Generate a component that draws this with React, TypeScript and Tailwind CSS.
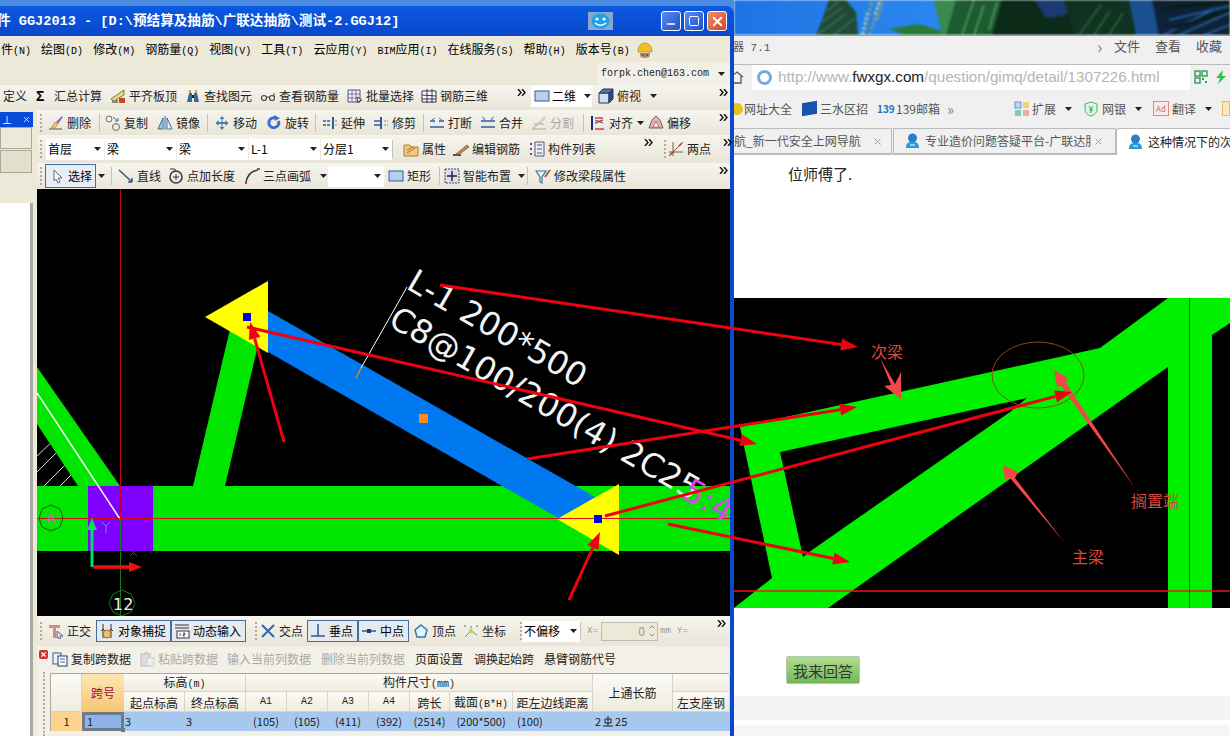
import React from "react";
import { Minus, Square, X, ChevronUp, ChevronDown } from "lucide-react";

const svgBox = "w-4 h-4 shrink-0";

const icons: Record<string, React.ReactNode> = {
  broom: (<><path d="M1 14h13" stroke="#555" strokeWidth="1" /><path d="M3 13l4-6 3 2-3 4z" fill="#e8c860" stroke="#9a7a30" strokeWidth=".5" /><path d="M8 7l6-6 1 1-5 7z" fill="#a060c0" /></>),
  copy: (<><circle cx="4" cy="4" r="3" fill="none" stroke="#667" /><circle cx="11" cy="12" r="3.5" fill="none" stroke="#667" /><path d="M8 2l5 4M13 3v3h-3" stroke="#3a6ea5" fill="none" /></>),
  mirror: (<><path d="M1 14L6 3v11z" fill="#a8c8e8" stroke="#3a6ea5" /><path d="M15 14L10 3v11z" fill="#e8f0fa" stroke="#3a6ea5" /><path d="M8 1v14" stroke="#3a6ea5" /></>),
  move: (<path d="M8 1l2.500 3h-2v3h3v-2l3 3-3 3v-2h-3v3h2L8 15l-2.500-3h2V9h-3v2l-3-3 3-3v2h3V4h-2z" fill="#4a7aa8" />),
  rotate: (<><path d="M12.500 6a5 5 0 1 1-2-2.500" fill="none" stroke="#3a70d0" strokeWidth="3" /><path d="M8 0l6 3-5 3z" fill="#3a70d0" /></>),
  extend: (<><path d="M1 6h8M1 10h8" stroke="#2a5fa8" strokeWidth="1.500" strokeDasharray="3 1" /><path d="M11 2v12" stroke="#2a5fa8" strokeWidth="2" /><path d="M13 6h2M13 10h2" stroke="#889" /></>),
  trim: (<><path d="M1 6h6M1 10h6" stroke="#2a5fa8" strokeWidth="1.500" /><path d="M8 2v12" stroke="#2a5fa8" strokeWidth="2" /><path d="M11 6h4M11 10h4" stroke="#889" strokeDasharray="2 1" /></>),
  brk: (<><path d="M1 6h5M10 6h5M1 12h14" stroke="#2a5fa8" strokeWidth="1.500" /><path d="M6 3L3 5l3 2M10 3l3 2-3 2" stroke="#3a80d0" fill="none" /></>),
  merge: (<><path d="M1 6h14M1 12h14" stroke="#2a5fa8" strokeWidth="1.500" /><path d="M2 2l3 2-3 2M14 2l-3 2 3 2" stroke="#3a80d0" fill="none" /></>),
  split: (<><path d="M1 14L13 4M1 14h14M3 9h10" stroke="#c0c0b8" strokeWidth="1.500" fill="none" /><path d="M10 3l5-2-2 5z" fill="#d0d0c8" /></>),
  align: (<><path d="M2 1v14" stroke="#1a2a80" strokeWidth="2" /><path d="M5 3h8M5 8l8-3M5 14h9" stroke="#d04040" strokeWidth="1.500" /><path d="M5 5l8 3" stroke="#2a5fa8" /></>),
  offset: (<><path d="M1 13l3-8 4-4 4 4 3 8z" fill="#e8b0b0" stroke="#666" /><path d="M5 12l3-6 3 6z" fill="#fff" stroke="#c06060" /></>),
  attr: (<><path d="M1 4h6l1 2h7v9H1z" fill="#f0c880" stroke="#b08030" /><path d="M4 12l8-5M4 9l6-3" stroke="#c06020" /></>),
  edit: (<><path d="M0 14h8" stroke="#222" strokeWidth="1.500" /><path d="M3 13L14 4l2 2-11 8z" fill="#c09040" stroke="#504020" strokeWidth=".6" /></>),
  list: (<><path d="M6 1h9v14H6z" fill="#e8f0fa" stroke="#557" /><path d="M8 4h5M8 8h5M8 12h5" stroke="#557" /><path d="M1 3h3M1 8h3M1 13h3" stroke="#557" strokeWidth="2" strokeDasharray="2 1" /></>),
  twoPt: (<><path d="M1 15L15 1M5 1v14M1 11h14" stroke="#7a6040" fill="none" /><path d="M2 14l3-3M11 5l3-3" stroke="#c03030" strokeWidth="1.500" /></>),
  cursor: (<path d="M5 2l8 8H9l2 4-2 1-2-4-2 2z" fill="#fff" stroke="#667" />),
  line: (<path d="M1 2l13 12M14 14v-4M14 14h-4" stroke="#3a5a80" strokeWidth="1.500" fill="none" />),
  ptLen: (<><circle cx="8" cy="9" r="6" fill="none" stroke="#334" strokeWidth="1.500" /><path d="M5 9h6M8 6v6" stroke="#334" /><path d="M2 1h5v3" fill="none" stroke="#334" /></>),
  arc: (<><path d="M2 15C3 7 7 3 14 2" fill="none" stroke="#3a3a3a" strokeWidth="1.500" /><path d="M2 13v3M13 1h3" stroke="#d04040" strokeWidth="2" /></>),
  rect: (<rect x="1" y="3" width="14" height="10" fill="#b8cef0" stroke="#3a5a90" />),
  smart: (<><rect x="1" y="1" width="14" height="14" fill="#dde" stroke="#445" strokeDasharray="2 1" /><path d="M8 3v10M3 8h10" stroke="#223" strokeWidth="1.500" /></>),
  funnel: (<><path d="M1 3h10L7 9v6l-2-1V9z" fill="#e8f4f8" stroke="#3a7a8a" strokeWidth="1.200" /><path d="M10 9l5-7" stroke="#a06040" strokeWidth="2" /></>),
  level: (<><path d="M1 11l10-7 3-2v5L4 13z" fill="#f0d870" stroke="#776" /><rect x="9" y="10" width="6" height="5" fill="#c84820" /><rect x="2" y="12" width="6" height="3" fill="#887" /></>),
  binoc: (<><path d="M2 14l2-9h3v9zM9 14V5h3l2 9z" fill="#3a6a9a" /><path d="M7 7h2v3H7z" fill="#222" /><path d="M4 2h2v3H4zM10 2h2v3h-2z" fill="#c8a040" /></>),
  glasses: (<><circle cx="4" cy="10" r="2.500" fill="none" stroke="#444" strokeWidth="1.200" /><circle cx="12" cy="10" r="2.500" fill="none" stroke="#444" strokeWidth="1.200" /><path d="M6 9h4M14 9V5" stroke="#444" /></>),
  batch: (<><path d="M1 2h12v12H1z" fill="#eef" stroke="#557" /><path d="M1 6h12M1 10h12M5 2v12M9 2v12" stroke="#557" strokeWidth=".7" /><path d="M10 9l5 3-3 1-1 2z" fill="#fff" stroke="#445" /></>),
  cube3: (<><path d="M1 3h14v11H1z" fill="#fff" stroke="#335" /><path d="M6 1v14M11 1v14M1 7l14 1M1 11h14" stroke="#335" /></>),
  view3d: (<><path d="M1 5h10v10H1z" fill="#cfe0f4" stroke="#335" /><path d="M1 5l4-4h10L11 5z" fill="#4a78b8" stroke="#335" /><path d="M11 5l4-4v10l-4 4z" fill="#2a4a80" stroke="#335" /></>),
  ortho: (<><path d="M1 2h11v3H8v10H5V5H1z" fill="#d08a8a" /><path d="M9 8l6 5h-3l1 2-2 1-1-2-1 1z" fill="#dde" stroke="#667" /></>),
  snap: (<><path d="M4 1v14M12 1v14" stroke="#333" /><path d="M2 8l2-2 2 2M10 8l2-2 2 2" stroke="#333" fill="none" /><circle cx="8" cy="11" r="4" fill="#e8c070" stroke="#a07020" /></>),
  dyn: (<><path d="M1 2h14M1 5h14" stroke="#333" /><rect x="3" y="8" width="12" height="7" fill="#fff" stroke="#333" /><path d="M6 10v3M9 10h2v1.500H9V13h2" stroke="#333" fill="none" strokeWidth=".8" /></>),
  cross: (<path d="M2 2l12 12M14 2L2 14" stroke="#2a6ab0" strokeWidth="2" />),
  perp: (<path d="M1 13h14M8 1v12" stroke="#2a5a90" strokeWidth="1.500" />),
  mid: (<><path d="M1 8h14" stroke="#2a5a90" strokeWidth="1.500" /><rect x="6" y="6" width="4" height="4" fill="#1a3a80" /></>),
  vertex: (<path d="M8 2l6 5-2 7H4L2 7z" fill="#e8f4fc" stroke="#2a7ab0" strokeWidth="1.500" />),
  coord: (<><path d="M8 8V2M8 8l-6 6M8 8l6 4" stroke="#2a6ab0" strokeDasharray="2 1" /><circle cx="2" cy="3" r="1" fill="#7a9" /><circle cx="14" cy="3" r="1" fill="#7a9" /><circle cx="8" cy="8" r="2" fill="#c0d040" /></>),
  copyData: (<><rect x="1" y="2" width="8" height="11" fill="#e8f0fa" stroke="#3a5a90" /><rect x="6" y="5" width="9" height="10" fill="#fff" stroke="#1a3a70" /><path d="M8 8h5M8 11h5" stroke="#3a5a90" /></>),
  pasteData: (<><rect x="2" y="3" width="9" height="12" fill="#ddd" stroke="#bbb" /><rect x="8" y="7" width="7" height="8" fill="#eee" stroke="#ccc" /><rect x="5" y="1" width="4" height="3" fill="#ccc" /></>),
};

const Ico = ({ name }: { name: string }) => (
  <svg viewBox="0 0 16 16" className={svgBox}>
    {icons[name]}
  </svg>
);

const Caret = () => (
  <svg viewBox="0 0 7 4" className="w-[7px] h-[4px] shrink-0">
    <path d="M0 0h7L3.500 4z" fill="#222" />
  </svg>
);

const More = ({ className = "ml-auto mr-[2px]" }: { className?: string }) => (
  <svg viewBox="0 0 9 7" className={`w-[9px] h-[7px] shrink-0 self-start mt-[4px] ${className}`}>
    <path d="M1 0l3 3.500L1 7M5 0l3 3.500L5 7" fill="none" stroke="#111" strokeWidth="1.400" />
  </svg>
);

const Sep = ({ w }: { w: string }) => (
  <div className={`${w} h-full flex items-center shrink-0`}>
    <div className="w-px h-[18px] bg-[#c5c2b2]" />
  </div>
);

const Grip = ({ w }: { w: string }) => (
  <div className={`${w} h-full flex items-center shrink-0 pl-[3px]`}>
    <div className="h-[18px] w-[2px] border-l-2 border-dotted border-[#b0ad9c]" />
  </div>
);

const Tool = ({ w, icon, children, off, className = "" }: { w: string; icon?: string; children?: React.ReactNode; off?: boolean; className?: string }) => (
  <div className={`${w} ${className} ${off ? "text-[#a9a9a4]" : "text-[#222]"} flex items-center gap-[3px] shrink-0 whitespace-nowrap`}>
    {icon && <Ico name={icon} />}
    {children && <span>{children}</span>}
  </div>
);

const Combo = ({ w, children }: { w: string; children?: React.ReactNode }) => (
  <div className={`${w} h-[21px] bg-white flex items-center justify-between pl-[2px] pr-[3px] shrink-0 whitespace-nowrap`}>
    <span>{children}</span>
    <Caret />
  </div>
);

const Bar = ({ h, children }: { h: string; children: React.ReactNode }) => (
  <div className={`${h} flex items-center bg-gradient-to-b from-[#f6f5ee] to-[#e9e5d7] shrink-0`}>{children}</div>
);

const mono = "font-['Liberation_Mono'] text-[10px]";

const M = ({ label, k, pre }: { label: string; k: string; pre?: string }) => (
  <span className="whitespace-nowrap">
    {pre && <span className={mono}>{pre}</span>}
    {label}
    <span className={mono}>({k})</span>
  </span>
);

const Toggle = ({ w, icon, children }: { w: string; icon: string; children: React.ReactNode }) => (
  <div className={`${w} h-[22px] border border-[#3f6fa5] bg-[#e6e9ee] flex items-center gap-[3px] pl-[2px] shrink-0 whitespace-nowrap`}>
    <Ico name={icon} />
    <span>{children}</span>
  </div>
);

const Cad = () => (
  <svg viewBox="37 189 693 427" className="block w-[693px] h-[427px]">
    <rect x="37" y="189" width="693" height="427" fill="#000" />
    <path d="M37 456l17-16M37 472l32-32M44 486l29-29M60 486l17-17" stroke="#d8d8d8" strokeWidth="1" />
    <polygon points="37,367 120,486 78,486 37,424" fill="#00e600" />
    <polygon points="193,486 231,325 258,345 225,486" fill="#00e600" />
    <rect x="37" y="486" width="693" height="65" fill="#00e600" />
    <rect x="88" y="486" width="65" height="65" fill="#7f00ff" />
    <path d="M37 393L120 519" stroke="#fff" strokeWidth="1.500" />
    <polygon points="268,311 595,497 560,519 268,352" fill="#0078f0" />
    <polygon points="205,317 268,281 268,353" fill="#ffff00" />
    <polygon points="557,519 619,484 619,555" fill="#ffff00" />
    <path d="M120.500 189V519" stroke="#c00020" />
    <path d="M120.500 519V616" stroke="#1a7a1a" />
    <path d="M37 518.500H730" stroke="#d01010" />
    <rect x="243" y="313" width="8" height="8" fill="#0000e0" />
    <rect x="594" y="515" width="8" height="8" fill="#0000e0" />
    <rect x="419" y="414" width="9" height="9" fill="#ff8a1a" />
    <path d="M407 287L361 368" stroke="#fff" />
    <path d="M361 368L356 378" stroke="#c8863a" strokeWidth="1.500" />
    <g fontFamily="DejaVu Sans" fontSize="32.5" fill="#f4f4f4">
      <text transform="translate(405 288) rotate(30)">L-1 200*500</text>
      <text transform="translate(387 325) rotate(30)">C8@100/200(4) 2C25</text>
      <text transform="translate(680 497) rotate(30)" fill="#d848e8">5:40</text>
    </g>
    <polygon points="51,505 60,509 63,518 60,527 51,531 42,527 39,518 42,509" fill="none" stroke="#126012" />
    <text x="46" y="523" fontFamily="Liberation Sans" fontWeight="700" fontSize="13" fill="#c070b0">A</text>
    <polygon points="122,590 131,594 135,603 131,612 122,616 113,612 109,603 113,594" fill="none" stroke="#1a7a1a" />
    <text x="113" y="610" fontFamily="DejaVu Sans" fontSize="16" fill="#eee">12</text>
    <path d="M92 567V525" stroke="#00e060" strokeWidth="3" />
    <polygon points="92,518 97,530 87,530" fill="#00e060" />
    <path d="M93 567H132" stroke="#f01010" strokeWidth="3.500" />
    <polygon points="142,567 129,562 129,572" fill="#f01010" />
    <path d="M102 522l4 4 4-4M106 526v7" stroke="#6a9ac8" fill="none" />
    <path d="M130 549l7 7M137 549l-7 7" stroke="#c02020" />
  </svg>
);

const Table = () => {
  const head = "flex items-center justify-center border-r border-b border-[#d8d5c8] bg-gradient-to-b from-[#fbfaf5] to-[#efecdf] whitespace-nowrap overflow-hidden";
  const cell = "flex items-center bg-[#a6c8ee] border-r border-[#a6c8ee] whitespace-nowrap";
  return (
    <div className="ml-[13px] mt-[1px] w-[679px] border-t border-l border-[#aaa89a] grid grid-cols-[31px_42px_61px_61px_41px_41px_41px_41px_40px_63px_80px_80px_57px] grid-rows-[18px_20px_19px] bg-white text-[#222]">
      <div className={`${head} row-span-2`} />
      <div className="row-span-2 flex items-center justify-center bg-gradient-to-b from-[#fde7b4] to-[#f5c66f] text-[#a01040]">跨号</div>
      <div className={`${head} col-span-2`}>
        <span>标高<span className={mono}>(m)</span></span>
      </div>
      <div className={`${head} col-span-7`}>
        <span>构件尺寸<span className={mono}>(mm)</span></span>
      </div>
      <div className={`${head} row-span-2`}>上通长筋</div>
      <div className={head} />
      <div className={`${head} pt-[2px]`}>起点标高</div>
      <div className={`${head} pt-[2px]`}>终点标高</div>
      <div className={`${head} ${mono}`}>A1</div>
      <div className={`${head} ${mono}`}>A2</div>
      <div className={`${head} ${mono}`}>A3</div>
      <div className={`${head} ${mono}`}>A4</div>
      <div className={`${head} pt-[2px]`}>跨长</div>
      <div className={`${head} pt-[2px]`}>
        <span>截面<span className={mono}>(B*H)</span></span>
      </div>
      <div className={`${head} pt-[2px]`}>距左边线距离</div>
      <div className={`${head} pt-[2px]`}>左支座钢</div>
      <div className="flex items-center justify-center bg-[#fdd38f] text-[11px]">1</div>
      <div className="relative flex items-center pl-[2px] bg-[#8db3e8] border-[3px] border-[#6e7b8b] text-[11px]">
        1<div className="absolute -right-[4px] -bottom-[4px] w-[4px] h-[4px] bg-[#6e7b8b]" />
      </div>
      <div className={`${cell} text-[11px] pl-[1px]`}>3</div>
      <div className={`${cell} text-[11px] pl-[1px]`}>3</div>
      {["(105)", "(105)", "(411)", "(392)", "(2514)", "(200*500)", "(100)"].map((v, i) => (
        <div key={i} className={`${cell} text-[11px] ${i === 6 ? "pl-[4px]" : "justify-center"}`}>
          {v}
        </div>
      ))}
      <div className={`${cell} text-[11px] pl-[2px] gap-[2px]`}>
        2
        <svg viewBox="0 0 10 11" className="w-[10px] h-[11px] shrink-0">
          <path d="M2 3h6v4H2zM5 0v10M0 10h10" fill="none" stroke="#222" />
        </svg>
        25
      </div>
      <div className={cell} />
    </div>
  );
};

const AppWindow = () => (
  <div className="w-[734px] h-full shrink-0 flex flex-col text-[12px] leading-none font-['Noto_Sans_CJK_SC',sans-serif] bg-gradient-to-b from-[#4a8ae0] to-[#3a7ad0]">
    <div className="mt-[6px] h-[30px] shrink-0 rounded-tr-lg bg-gradient-to-b from-[#0a5ae0] via-[#0a50d8] to-[#0a48c8] flex items-center">
      <span className="-ml-[3px] w-[591px] shrink-0 pt-[1px] text-white font-bold text-[13.6px] font-['Liberation_Mono','Noto_Sans_CJK_SC',monospace] whitespace-pre">件 GGJ2013 - [D:\预结算及抽筋\广联达抽筋\测试-2.GGJ12]</span>
      <svg viewBox="0 0 25 18" className="w-[25px] h-[18px] shrink-0">
        <rect width="25" height="18" fill="#8aa6cc" />
        <ellipse cx="12.500" cy="9" rx="9" ry="7.500" fill="#22a0e4" />
        <circle cx="9" cy="7" r="1.600" fill="#fff" />
        <circle cx="16" cy="7" r="1.600" fill="#fff" />
        <path d="M7 11c3 3 8 3 11 0" stroke="#fff" fill="none" strokeWidth="1.500" />
      </svg>
      <div className="ml-[48px] flex gap-[3px]">
        <div className="w-[20px] h-[20px] rounded-[3px] border border-white bg-gradient-to-br from-[#5a8af0] to-[#2050c8] flex items-end justify-center text-white">
          <Minus size={12} strokeWidth={3} />
        </div>
        <div className="w-[20px] h-[20px] rounded-[3px] border border-white bg-gradient-to-br from-[#5a8af0] to-[#2050c8] flex items-center justify-center text-white">
          <Square size={12} strokeWidth={2} />
        </div>
        <div className="w-[20px] h-[20px] rounded-[3px] border border-white bg-gradient-to-br from-[#f09070] to-[#d04020] flex items-center justify-center text-white">
          <X size={15} strokeWidth={3} />
        </div>
      </div>
    </div>
    <div className="flex-1 min-h-0 border-r-4 border-[#0a48d0] bg-[#ece9d8] flex flex-col">
      <div className="h-[26px] shrink-0 flex items-center gap-[10px] ml-[1px] pt-[2px]">
        <M label="件" k="N" />
        <M label="绘图" k="D" />
        <M label="修改" k="M" />
        <M label="钢筋量" k="Q" />
        <M label="视图" k="V" />
        <M label="工具" k="T" />
        <M label="云应用" k="Y" />
        <M pre="BIM" label="应用" k="I" />
        <M label="在线服务" k="S" />
        <M label="帮助" k="H" />
        <M label="版本号" k="B" />
        <svg viewBox="0 0 16 16" className="w-[16px] h-[16px] -ml-[3px] shrink-0">
          <path d="M3 11h10v2c0 2-2 3-5 3s-5-1-5-3z" fill="#b08868" />
          <path d="M1 10C1 4 4 1 8 1s7 3 7 9z" fill="#f0c020" stroke="#a88010" strokeWidth=".6" />
          <circle cx="6" cy="13" r=".8" fill="#222" />
          <circle cx="10" cy="13" r=".8" fill="#222" />
        </svg>
      </div>
      <div className="h-[23px] shrink-0 flex justify-end">
        <div className="w-[133px] h-full pt-[1px] bg-[#f3f1e7] flex items-center justify-between pl-[4px] pr-[5px] font-['Liberation_Mono'] text-[10px] text-[#222] rounded-l-sm">
          forpk.chen@163.com
          <Caret />
        </div>
      </div>
      <Bar h="h-[25px] pb-[3px]">
        <Tool w="w-[36px]" className="pl-[3px]">定义</Tool>
        <div className="w-[18px] shrink-0 font-['Liberation_Sans'] font-bold text-[14px]">Σ</div>
        <Tool w="w-[56px]">汇总计算</Tool>
        <Tool w="w-[75px]" icon="level">平齐板顶</Tool>
        <Tool w="w-[75px]" icon="binoc">查找图元</Tool>
        <Tool w="w-[87px]" icon="glasses">查看钢筋量</Tool>
        <Tool w="w-[74px]" icon="batch">批量选择</Tool>
        <Tool w="w-[96px]" icon="cube3">钢筋三维</Tool>
        <More className="w-[9px] mr-[5px]" />
        <div className="w-[61px] h-[21px] bg-white flex items-center pl-[3px] shrink-0 whitespace-nowrap">
          <Ico name="rect" />
          <span className="ml-[2px] shrink-0">二维</span>
          <div className="ml-[8px] shrink-0"><Caret /></div>
        </div>
        <Tool w="w-[52px]" icon="view3d" className="ml-[6px]">
          俯视
        </Tool>
        <Caret />
        <More />
      </Bar>
      <div className="flex-1 min-h-0 flex">
        <div className="w-[37px] shrink-0 flex flex-col">
          <div className="mt-[2px] h-[15px] w-[33px] bg-[#0a4ad8] flex items-center justify-between px-[2px] text-white shrink-0">
            <span className="text-[10px]">⊥</span>
            <X size={9} />
          </div>
          <div className="w-[32px] h-[22px] bg-[#ece9d8] border border-[#aca899] shrink-0" />
          <div className="w-[32px] h-[23px] mt-[1px] bg-[#e2dfcd] border border-[#aca899] shrink-0" />
          <div className="w-[33px] flex-1 mt-[30px] bg-white border-r-[3px] border-[#a9a9a0]" />
        </div>
        <div className="flex-1 min-w-0 flex flex-col">
          <Bar h="h-[25px]">
            <Grip w="w-[11px]" />
            <Tool w="w-[51px]" icon="broom">删除</Tool>
            <Sep w="w-[6px]" />
            <Tool w="w-[52px]" icon="copy">复制</Tool>
            <Tool w="w-[50px]" icon="mirror">镜像</Tool>
            <Sep w="w-[7px]" />
            <Tool w="w-[52px]" icon="move">移动</Tool>
            <Tool w="w-[49px]" icon="rotate">旋转</Tool>
            <Sep w="w-[7px]" />
            <Tool w="w-[51px]" icon="extend">延伸</Tool>
            <Tool w="w-[50px]" icon="trim">修剪</Tool>
            <Sep w="w-[6px]" />
            <Tool w="w-[51px]" icon="brk">打断</Tool>
            <Tool w="w-[51px]" icon="merge">合并</Tool>
            <Tool w="w-[52px]" icon="split" off>分割</Tool>
            <Sep w="w-[7px]" />
            <Tool w="w-[47px]" icon="align">对齐</Tool>
            <div className="w-[11px] shrink-0"><Caret /></div>
            <Tool w="w-[60px]" icon="offset">偏移</Tool>
            <More />
          </Bar>
          <Bar h="h-[28px]">
            <Grip w="w-[9px]" />
            <Combo w="w-[58px] mr-px">首层</Combo>
            <Combo w="w-[71px] mr-px">梁</Combo>
            <Combo w="w-[71px] mr-px">梁</Combo>
            <Combo w="w-[71px] mr-px">L-1</Combo>
            <Combo w="w-[71px]">分层1</Combo>
            <Sep w="w-[11px]" />
            <Tool w="w-[50px]" icon="attr">属性</Tool>
            <Tool w="w-[76px]" icon="edit">编辑钢筋</Tool>
            <Tool w="w-[115px]" icon="list">构件列表</Tool>
            <More className="mr-[8px]" />
            <Grip w="w-[7px]" />
            <Tool w="w-[55px]" icon="twoPt">两点</Tool>
            <More />
          </Bar>
          <Bar h="h-[26px]">
            <Grip w="w-[8px]" />
            <div className="w-[51px] h-[24px] border border-[#3f6fa5] bg-[#e8edf6] flex items-center gap-[3px] pl-[3px] shrink-0">
              <Ico name="cursor" />
              <span>选择</span>
            </div>
            <div className="w-[15px] pl-[2px] shrink-0"><Caret /></div>
            <Sep w="w-[7px]" />
            <Tool w="w-[50px]" icon="line">直线</Tool>
            <Tool w="w-[76px]" icon="ptLen">点加长度</Tool>
            <Tool w="w-[76px]" icon="arc">三点画弧</Tool>
            <div className="w-[8px] shrink-0"><Caret /></div>
            <Combo w="w-[56px] mr-[4px]" />
            <Tool w="w-[51px]" icon="rect">矩形</Tool>
            <Sep w="w-[5px]" />
            <Tool w="w-[74px]" icon="smart">智能布置</Tool>
            <div className="w-[9px] shrink-0"><Caret /></div>
            <Sep w="w-[8px]" />
            <Tool w="w-[110px]" icon="funnel">修改梁段属性</Tool>
            <More />
          </Bar>
          <Cad />
          <Bar h="h-[30px]">
            <Grip w="w-[11px]" />
            <Tool w="w-[48px]" icon="ortho">正交</Tool>
            <Toggle w="w-[75px]" icon="snap">对象捕捉</Toggle>
            <Toggle w="w-[75px]" icon="dyn">动态输入</Toggle>
            <Grip w="w-[8px] ml-[6px]" />
            <Tool w="w-[47px]" icon="cross">交点</Tool>
            <Toggle w="w-[51px]" icon="perp">垂点</Toggle>
            <Toggle w="w-[51px]" icon="mid">中点</Toggle>
            <Tool w="w-[50px] ml-[4px]" icon="vertex">顶点</Tool>
            <Tool w="w-[54px]" icon="coord">坐标</Tool>
            <Grip w="w-[5px]" />
            <Combo w="w-[58px]">不偏移</Combo>
            <Sep w="w-[7px]" />
            <span className="w-[14px] font-['Liberation_Mono'] text-[9px] text-[#999] shrink-0">X=</span>
            <div className="w-[57px] h-[19px] border border-[#bbb] bg-[#ece9d8] flex items-center justify-end gap-[3px] pr-[1px] text-[#999] shrink-0">
              0
              <div className="flex flex-col text-[#888]">
                <ChevronUp size={8} strokeWidth={3} />
                <ChevronDown size={8} strokeWidth={3} />
              </div>
            </div>
            <span className="w-[19px] pl-[2px] font-['Liberation_Mono'] text-[9px] text-[#999] shrink-0">mm</span>
            <span className="w-[14px] font-['Liberation_Mono'] text-[9px] text-[#999] shrink-0">Y=</span>
            <More className="ml-auto mr-[4px]" />
          </Bar>
          <div className="h-[26px] shrink-0 flex items-center pl-[2px] bg-[#f3f1e7]">
            <div className="w-[9px] h-[9px] mb-[10px] bg-[#d03030] rounded-[2px] flex items-center justify-center text-white shrink-0">
              <X size={7} strokeWidth={4} />
            </div>
            <Tool w="w-[87px] ml-[4px]" icon="copyData">复制跨数据</Tool>
            <Tool w="w-[88px]" icon="pasteData" off>粘贴跨数据</Tool>
            <Tool w="w-[94px]" off>输入当前列数据</Tool>
            <Tool w="w-[94px]" off>删除当前列数据</Tool>
            <Tool w="w-[59px]">页面设置</Tool>
            <Tool w="w-[70px]">调换起始跨</Tool>
            <Tool w="w-[84px]">悬臂钢筋代号</Tool>
          </div>
          <div className="flex-1 min-h-0 bg-[#f3f1e7] overflow-hidden relative">
            <div className="absolute left-[6px] top-0 bottom-0 border-l-2 border-dotted border-[#b0ad9c]" />
            <Table />
          </div>
        </div>
      </div>
    </div>
  </div>
);

const Beams = () => (
  <svg viewBox="734 298 496 310" className="block w-[496px] h-[310px] shrink-0">
    <rect x="734" y="298" width="496" height="310" fill="#000" />
    <polygon points="734,608 772,578 740,427 1100,348 1168,298 1230,298 1230,323 1212,335 1212,608 1168,608 1168,367 828,608" fill="#00f000" />
    <polygon points="780,452 1027,398 1010,412 812,550 803,557" fill="#000" />
    <path d="M734 591H1230" stroke="#f01818" strokeWidth="1.400" />
    <path d="M1189.500 298V608" stroke="#a02818" />
    <ellipse cx="1038" cy="375" rx="46" ry="33" fill="none" stroke="#8a4a20" />
    <polygon points="880,358 895,384 901,372 901,399 884,386 891,385" fill="#f04848" />
    <polygon points="1135,488 1066,383 1068,378 1054,370 1057,387 1061,386" fill="#f04848" />
    <polygon points="1064,542 1015,478 1018,472 1003,465 1005,480 1010,478" fill="#f04848" />
    <g fontFamily="Noto Sans CJK SC" fontSize="16" fill="#d8483c" textAnchor="middle">
      <text x="887" y="358">次梁</text>
      <text x="1155" y="507">搁置端</text>
      <text x="1088" y="563">主梁</text>
    </g>
  </svg>
);

const Wallpaper = () => (
  <div className="h-[35px] shrink-0 overflow-hidden">
    <svg viewBox="0 0 496 35" className="block w-[496px] h-[35px] blur-[1px]">
      <defs>
        <linearGradient id="sky" x1="0" y1="0" x2="1" y2="0">
          <stop offset="0" stopColor="#1f74e4" />
          <stop offset="0.4" stopColor="#2a86ee" />
          <stop offset="1" stopColor="#1a5ac0" />
        </linearGradient>
      </defs>
      <rect width="496" height="35" fill="url(#sky)" />
      <polygon points="95,0 112,0 122,12 124,35 82,35 88,20" fill="#1f4a36" />
      <path d="M84 34l28-20M88 22l20-14M92 12l12-10M100 35l20-16" stroke="#5f8a70" />
      <path d="M130 35l8-35M136 35l10-35M143 20l6-20" stroke="#7aa080" strokeWidth="3" strokeDasharray="3 2" />
      <path d="M128 34l6-24M141 14l5-14" stroke="#e8f0e0" strokeWidth="2" strokeDasharray="2 3" />
      <polygon points="155,29 185,24 210,32 208,35 170,35" fill="#2a7a3a" />
      <polygon points="200,0 232,0 212,35 208,35" fill="#3a8a50" />
      <polygon points="222,0 270,0 272,14 262,35 212,35" fill="#1c5c30" />
      <path d="M228 35l12-35M240 35l10-30M255 30l8-28" stroke="#5aa060" strokeWidth="1.500" />
      <polygon points="268,0 330,0 345,35 258,35" fill="#0c2a18" />
      <polygon points="300,0 345,0 330,16 312,18" fill="#1a3a70" />
      <polygon points="330,0 410,0 420,35 340,35" fill="#0f3320" />
      <path d="M345 35l22-30M360 35l16-24M375 35l14-22" stroke="#2f6a40" strokeWidth="1.500" />
      <polygon points="395,0 420,0 432,35 402,35" fill="#1a5090" />
      <polygon points="418,0 496,0 496,35 425,35" fill="#0d2238" />
      <path d="M430 35l50-26M445 35l50-22M435 20l60-14M470 35l26-10" stroke="#2a6ab0" strokeWidth="1.500" />
      <path d="M428 8l68-6M440 28l56-18" stroke="#0a1a10" strokeWidth="2.500" />
    </svg>
  </div>
);

const TabIcon = () => (
  <svg viewBox="0 0 15 16" className="w-[15px] h-[16px] shrink-0">
    <circle cx="7.500" cy="5" r="4.500" fill="#2a80c8" />
    <path d="M1 15c0-5 2-6 6.500-6s6.500 1 6.500 6z" fill="#2a9ad8" />
    <path d="M5 12h5" stroke="#fff" />
  </svg>
);

const Browser = () => (
  <div className="flex-1 min-w-0 h-full flex flex-col bg-white text-[12px] leading-none text-[#555] font-['Noto_Sans_CJK_SC',sans-serif] overflow-hidden">
    <Wallpaper />
    <div className="h-[29px] shrink-0 bg-[#f0f0f0] border-t border-[#999] flex items-start pt-[3px] text-[13px]">
      <span className="-ml-[1px] mt-[4px] w-[364px] shrink-0 font-['Liberation_Mono','Noto_Sans_CJK_SC',monospace] text-[11px] text-[#555]">器 7.1</span>
      <span className="w-[17px] text-[#888] text-[18px] -mt-[2px] shrink-0">›</span>
      <span className="w-[41px] shrink-0">文件</span>
      <span className="w-[41px] shrink-0">查看</span>
      <span className="shrink-0">收藏</span>
    </div>
    <div className="h-[28px] shrink-0 bg-[#f0f0f0] border-t border-[#bbb] flex items-center pb-[3px]">
      <svg viewBox="0 0 14 14" className="w-[14px] h-[14px] -ml-[4px] shrink-0">
        <path d="M1 7l6-5 6 5M3 6v7h8V6" fill="none" stroke="#555" strokeWidth="1.300" />
      </svg>
      <div className="ml-[8px] w-[438px] h-[25px] bg-white flex items-center shrink-0">
        <div className="ml-[5px] w-[15px] h-[15px] rounded-full border-[3px] border-[#7aa8d8] shrink-0" />
        <span className="ml-[6px] font-['Liberation_Sans'] text-[15.2px] text-[#b4b4b4] whitespace-nowrap">
          http://www.<span className="text-[#222]">fwxgx.com</span>/question/gimq/detail/1307226.html
        </span>
      </div>
      <svg viewBox="0 0 14 14" className="ml-[4px] w-[14px] h-[14px] shrink-0">
        <path d="M1 1h5v5H1zM8 1h5v5H8zM1 8h5v5H1z" fill="none" stroke="#3aa060" strokeWidth="1.500" />
        <path d="M8 8h2v2H8zM11 11h2v2h-2z" fill="#3aa060" />
      </svg>
      <svg viewBox="0 0 12 14" className="ml-[7px] w-[12px] h-[14px] shrink-0">
        <path d="M8 0L1 8h4l-2 6 8-8H7z" fill="#30c050" />
      </svg>
    </div>
    <div className="h-[36px] shrink-0 bg-[#f0f0f0] flex items-center whitespace-nowrap pb-[3px]">
      <div className="-ml-[3px] w-[12px] h-[12px] rounded-full bg-[#e8c020] shrink-0" />
      <span className="ml-[1px] w-[58px] shrink-0">网址大全</span>
      <div className="w-[15px] h-[13px] bg-[#1a50b0] skew-y-[-10deg] shrink-0" />
      <span className="ml-[3px] w-[57px] shrink-0">三水区招</span>
      <span className="w-[17px] font-bold text-[10px] text-[#2a70c0] shrink-0">139</span>
      <span className="ml-[2px] w-[51px] shrink-0">139邮箱</span>
      <span className="w-[67px] text-[#888] text-[15px] shrink-0">»</span>
      <svg viewBox="0 0 16 16" className="w-[16px] h-[16px] shrink-0">
        <rect x="1" y="1" width="6" height="6" fill="#bcd6f4" stroke="#5a90d0" />
        <rect x="9" y="1" width="6" height="6" fill="#f4d070" />
        <rect x="1" y="9" width="6" height="6" fill="#7ad0a0" />
        <rect x="9" y="9" width="6" height="6" fill="#f0a8a8" />
      </svg>
      <span className="ml-[2px] w-[33px] shrink-0">扩展</span>
      <div className="w-[18px] shrink-0"><Caret /></div>
      <svg viewBox="0 0 14 16" className="w-[16px] h-[16px] shrink-0">
        <path d="M7 1l6 2v5c0 4-3 6-6 7-3-1-6-3-6-7V3z" fill="#dff4e4" stroke="#50b070" />
        <path d="M5 5l2 3 2-3M7 8v4M5 9h4" stroke="#30a060" fill="none" />
      </svg>
      <span className="ml-[3px] w-[33px] shrink-0">网银</span>
      <div className="w-[18px] shrink-0"><Caret /></div>
      <div className="w-[16px] h-[15px] bg-[#fbeaea] border border-[#d88] text-[8px] text-[#d66] flex items-center justify-center shrink-0">Ad</div>
      <span className="ml-[3px] w-[33px] shrink-0">翻译</span>
      <div className="w-[17px] shrink-0"><Caret /></div>
      <div className="w-[8px] h-[15px] bg-[#fbe8c0] border border-[#e8b860] shrink-0" />
    </div>
    <div className="h-[27px] shrink-0 bg-[#f0f0f0] border-b border-[#bbb] flex items-end whitespace-nowrap">
      <div className="w-[158px] h-[26px] border border-l-0 border-[#bbb] flex items-center justify-between pr-[8px] shrink-0">
        <span>航_新一代安全上网导航</span>
        <X size={11} className="text-[#999]" />
      </div>
      <div className="ml-[1px] w-[223px] h-[26px] border border-[#bbb] flex items-center pl-[11px] shrink-0">
        <TabIcon />
        <span className="ml-[5px] w-[166px] overflow-hidden">专业造价问题答疑平台-广联达服务新干线</span>
        <X size={11} className="text-[#999] ml-[2px]" />
      </div>
      <div className="flex-1 h-[27px] -mb-px bg-white border border-r-0 border-b-0 border-[#bbb] flex items-center pl-[11px] rounded-t-sm text-[#222]">
        <TabIcon />
        <span className="ml-[5px]">这种情况下的次梁</span>
      </div>
    </div>
    <div className="h-[143px] shrink-0 pl-[54px] pt-[11px] text-[15px] text-[#222]">位师傅了.</div>
    <Beams />
    <div className="h-[88px] shrink-0 pl-[52px] pt-[48px]">
      <div className="w-[74px] h-[28px] border border-[#b4c8ac] bg-gradient-to-b from-[#b0dc90] to-[#70b858] flex items-center justify-center text-[15px] text-[#333] rounded-[2px]">我来回答</div>
    </div>
    <div className="h-[24px] shrink-0 bg-[#f4f4f4]" />
    <div className="h-[5px] shrink-0 bg-white" />
    <div className="flex-1 bg-[#f6f6f6]" />
  </div>
);

const Arrow = ({ x1, y1, x2, y2 }: { x1: number; y1: number; x2: number; y2: number }) => {
  const a = Math.atan2(y2 - y1, x2 - x1);
  const len = 17;
  const half = 6;
  const bx = x2 - len * Math.cos(a);
  const by = y2 - len * Math.sin(a);
  const nx = -Math.sin(a) * half;
  const ny = Math.cos(a) * half;
  return (
    <>
      <line x1={x1} y1={y1} x2={bx} y2={by} stroke="#f00010" strokeWidth="3" />
      <polygon points={`${x2},${y2} ${bx + nx},${by + ny} ${bx - nx},${by - ny}`} fill="#f00010" />
    </>
  );
};

const arrows = [
  [440, 285, 858, 347],
  [247, 327, 757, 444],
  [527, 459, 857, 407],
  [605, 516, 1072, 392],
  [668, 524, 850, 562],
  [284, 442, 250, 322],
  [569, 600, 600, 532],
];

export default function App() {
  return (
    <div className="relative w-[1230px] h-[736px] overflow-hidden flex">
      <AppWindow />
      <Browser />
      {/* annotation arrows drawn across both windows */}
      <svg viewBox="0 0 1230 736" className="absolute inset-0 w-[1230px] h-[736px] pointer-events-none">
        {arrows.map(([x1, y1, x2, y2], i) => (
          <Arrow key={i} x1={x1} y1={y1} x2={x2} y2={y2} />
        ))}
      </svg>
    </div>
  );
}
